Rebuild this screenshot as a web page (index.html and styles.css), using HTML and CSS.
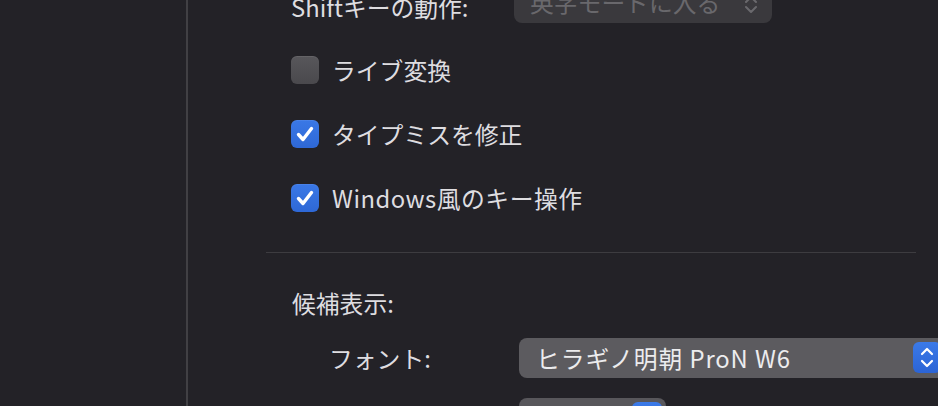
FILE: index.html
```html
<!DOCTYPE html>
<html lang="ja">
<head>
<meta charset="utf-8">
<link rel="stylesheet" href="styles.css">
</head>
<body>
<div class="window">
  <aside class="sidebar"></aside>
  <main class="content">
    <div class="shift-row">
      <span class="label shift-label">Shiftキーの動作:</span>
      <div class="popup disabled">
        <span class="popup-text">英字モードに入る</span>
        <svg class="chev" width="14" height="40" viewBox="0 0 14 40"><path d="M2 19 L7 14 L12 19 M2 24 L7 29 L12 24" fill="none" stroke="#6a696d" stroke-width="2" stroke-linecap="round" stroke-linejoin="round"/></svg>
      </div>
    </div>

    <div class="check-row first">
      <span class="cb"></span>
      <span class="check-label">ライブ変換</span>
    </div>
    <div class="check-row">
      <span class="cb on"><svg width="28" height="28" viewBox="0 0 28 28"><path d="M7.5 14.5 L12 19.5 L20.5 8.5" fill="none" stroke="#fff" stroke-width="3.4" stroke-linecap="round" stroke-linejoin="round"/></svg></span>
      <span class="check-label">タイプミスを修正</span>
    </div>
    <div class="check-row">
      <span class="cb on"><svg width="28" height="28" viewBox="0 0 28 28"><path d="M7.5 14.5 L12 19.5 L20.5 8.5" fill="none" stroke="#fff" stroke-width="3.4" stroke-linecap="round" stroke-linejoin="round"/></svg></span>
      <span class="check-label wide-label">Windows風のキー操作</span>
    </div>

    <div class="sep"></div>

    <div class="section-title">候補表示:</div>

    <div class="font-row">
      <span class="label font-label">フォント:</span>
      <div class="popup wide">
        <span class="popup-text font-name">ヒラギノ明朝 ProN W6</span>
        <span class="stepper"><svg width="28" height="31" viewBox="0 0 28 31"><path d="M9 12 L14 7 L19 12 M9 19 L14 24 L19 19" fill="none" stroke="#fff" stroke-width="2.2" stroke-linecap="round" stroke-linejoin="round"/></svg></span>
      </div>
    </div>

    <div class="size-row">
      <div class="popup small">
        <span class="stepper small-stepper"></span>
      </div>
    </div>
  </main>
</div>
</body>
</html>
```

FILE: styles.css
```css
html, body {
  margin: 0;
  padding: 0;
  background: #232227;
}
body {
  width: 938px;
  height: 406px;
  overflow: hidden;
  font-family: "Noto Sans CJK JP", "Noto Sans", sans-serif;
  color: #dedde0;
  font-size: 23.8px;
}
.window {
  display: flex;
  height: 406px;
}
.sidebar {
  width: 186px;
  flex: none;
  border-right: 2px solid #414044;
  background: #232227;
}
.content {
  flex: 1;
  display: flex;
  flex-direction: column;
  padding-left: 78px;
  min-width: 0;
}
.content > * {
  flex: none;
}
.label {
  line-height: 28px;
  white-space: nowrap;
  flex: none;
}
.shift-row {
  display: flex;
  align-items: center;
  margin-top: -17px;
  margin-left: 25px;
  height: 40px;
}
.shift-label {
  width: 223px;
  margin-top: 8px;
}
.popup {
  height: 40px;
  border-radius: 8px;
  display: flex;
  align-items: center;
  box-sizing: border-box;
  position: relative;
  flex: none;
}
.popup.disabled {
  width: 258px;
  background: #3a393d;
  color: #69686c;
  padding-left: 16px;
}
.popup.disabled .popup-text {
  margin-top: -2px;
}
.chev {
  position: absolute;
  right: 14px;
  top: 0;
}
.popup-text {
  white-space: nowrap;
  line-height: 28px;
}
.font-name {
  letter-spacing: 0.9px;
}
.check-row {
  display: flex;
  align-items: center;
  margin-left: 25px;
  height: 28px;
  margin-top: 36px;
}
.check-row.first {
  margin-top: 33px;
}
.cb {
  width: 28px;
  height: 28px;
  box-sizing: border-box;
  border-radius: 6px;
  background: linear-gradient(#58575b, #4a494d);
  box-shadow: inset 0 1px 0 rgba(255,255,255,0.08);
  flex: none;
  display: flex;
}
.cb.on {
  background: linear-gradient(#3a78e6, #2e68d6);
}
.check-label {
  margin-left: 13px;
  line-height: 28px;
  white-space: nowrap;
}
.wide-label {
  letter-spacing: 0.5px;
}
.sep {
  height: 1px;
  width: 650px;
  background: #3d3c40;
  margin-top: 40px;
}
.section-title {
  margin-left: 26px;
  line-height: 28px;
  margin-top: 36px;
}
.font-row {
  display: flex;
  align-items: center;
  margin-left: 63px;
  margin-top: 21px;
}
.font-label {
  width: 190px;
}
.popup.wide {
  width: 440px;
  background: #5c5b5f;
  color: #ececee;
  padding-left: 17px;
}
.stepper {
  position: absolute;
  left: 394px;
  top: 4px;
  width: 28px;
  height: 31px;
  border-radius: 6px;
  background: linear-gradient(#3b7ae8, #2b64d5);
  display: flex;
}
.size-row {
  display: flex;
  margin-left: 253px;
  margin-top: 20px;
}
.popup.small {
  width: 147px;
  background: #58575b;
}
.small-stepper {
  left: 113px;
  width: 30px;
}
```
